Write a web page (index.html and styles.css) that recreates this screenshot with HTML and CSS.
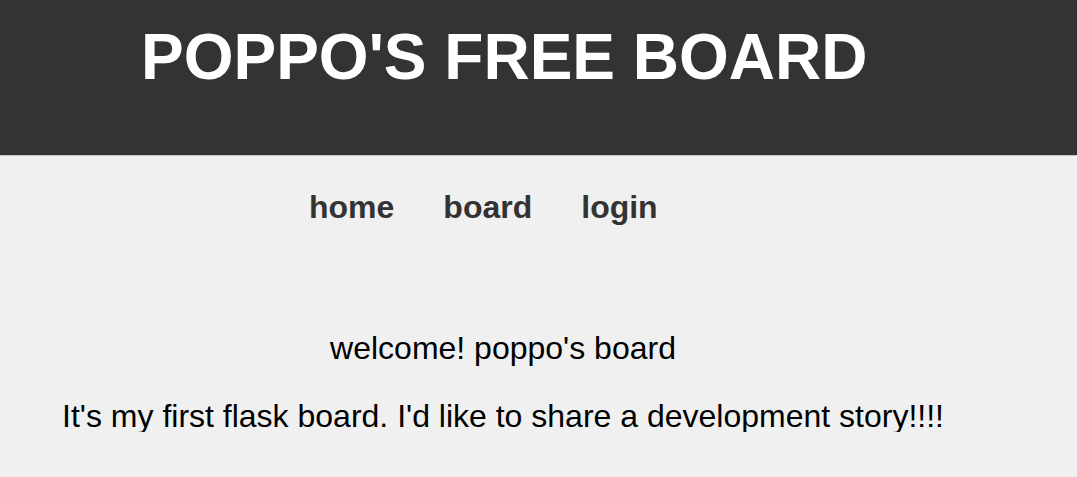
FILE: index.html
```html
<!DOCTYPE html>
<html lang="en">
<head>
    <meta charset="UTF-8">
    <meta name="viewport" content="width=device-width, initial-scale=1.0">
    <title>POPPO'S FREE BOARD</title>
    <link rel="stylesheet" href="styles.css">
</head>
<body>
    <header class="header">
        <h1 class="title">POPPO'S FREE BOARD</h1>
    </header>

    <nav class="nav">
        <a href="#" class="nav-link">home</a>
        <a href="#" class="nav-link">board</a>
        <a href="#" class="nav-link">login</a>
    </nav>

    <main class="content">
        <p class="welcome">welcome! poppo's board</p>
        <p class="intro">It's my first flask board. I'd like to share a development story!!!!</p>
    </main>
</body>
</html>
```

FILE: styles.css
```css
body {
    font-family: "Liberation Sans", Arial, sans-serif;
    background-color: #f0f0f0;
    margin: 0;
    color: #000;
}
.header {
    background-color: #333;
    height: 156px;
    box-sizing: border-box;
    padding: 25px 0 0 141px;
    border-bottom: 1px solid #c8c8c8;
}
.title {
    margin: 0;
    color: #fff;
    font-size: 64px;
    line-height: 64px;
    font-weight: bold;
}
.nav {
    display: flex;
    gap: 49px;
    padding-left: 309px;
    margin-top: 35px;
}
.nav-link {
    color: #333;
    font-size: 32px;
    line-height: 32px;
    font-weight: bold;
    text-decoration: none;
}
.content {
    padding-right: 71px;
    text-align: center;
    margin-top: 109px;
}
.welcome, .intro {
    margin: 0;
    font-size: 32px;
    line-height: 32px;
}
.intro {
    margin-top: 36px;
}
```
